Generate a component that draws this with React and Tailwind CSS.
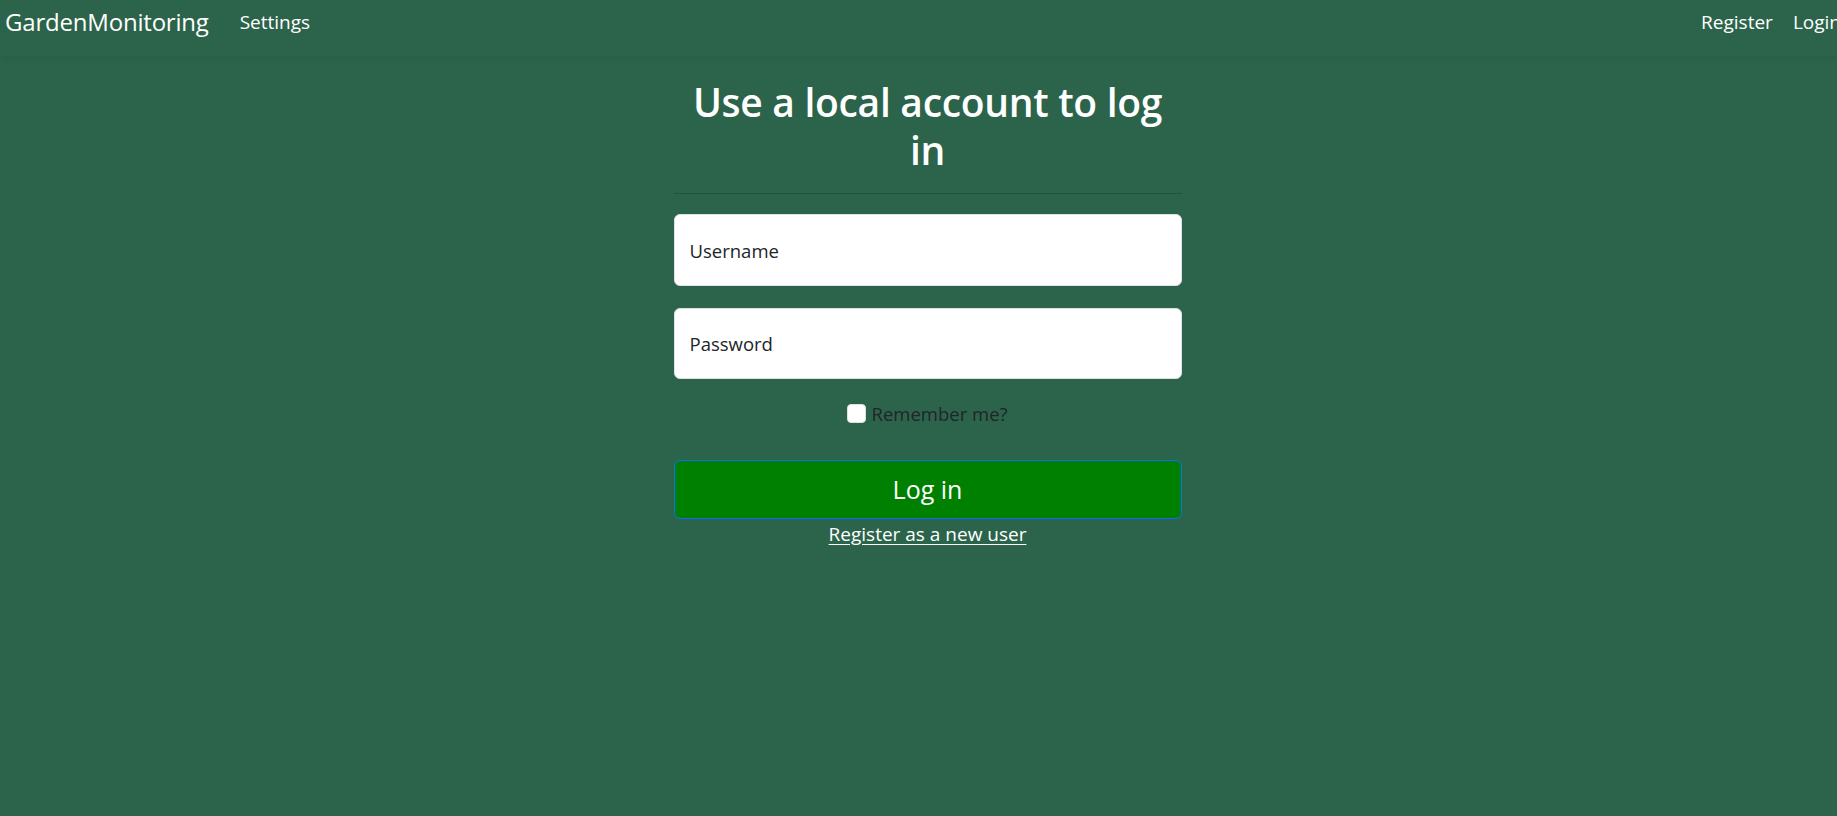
import { useState } from 'react';

export default function App() {
  const [remember, setRemember] = useState(false);

  return (
    <div className="min-h-screen w-full overflow-hidden bg-[#2c644b] font-['Open_Sans',sans-serif] text-white">
      {/* Navbar */}
      <nav className="relative z-10 flex h-[56px] items-start justify-between pt-[10px] shadow-[0_3px_6px_rgba(0,0,0,0.06)]">
        <div className="flex items-center">
          <a href="#" className="ml-[5px] text-[24px] leading-[24px] tracking-[-0.2px]">GardenMonitoring</a>
          <a href="#" className="ml-[31px] text-[19px] leading-[24px]">Settings</a>
        </div>
        <div className="mr-[-4px] flex items-center gap-[20px] text-[19px] leading-[24px]">
          <a href="#">Register</a>
          <a href="#">Login</a>
        </div>
      </nav>

      {/* Login form */}
      <div className="flex justify-center pl-[18px]">
        <main className="w-[508px] pt-[22px]">
          <h1 className="px-[12px] text-center text-[39px] font-semibold leading-[48px] tracking-[-0.3px]">
            Use a local account to log in
          </h1>
          <hr className="mt-[19px] mb-[20px] border-t border-[#23503c]" />

          <div className="flex flex-col gap-[22px]">
            <input
              type="text"
              placeholder="Username"
              className="h-[72px] w-full rounded-[6px] border border-[#dee2e6] bg-white px-[15px] text-[18.5px] text-[#212529] placeholder:text-[#212529] outline-none"
            />
            <input
              type="password"
              placeholder="Password"
              className="h-[71px] w-full rounded-[6px] border border-[#dee2e6] bg-white px-[15px] text-[18.5px] text-[#212529] placeholder:text-[#212529] outline-none"
            />
          </div>

          <label className="mt-[21px] flex items-center justify-center gap-[5px] text-[18.5px] text-[#212529]">
            <span
              onClick={() => setRemember(!remember)}
              className="block h-[19px] w-[19px] rounded-[4px] border border-[#dee2e6] bg-white"
            >
              {remember && <span className="block text-center text-[13px] leading-[17px] text-[#008000]">✓</span>}
            </span>
            Remember me?
          </label>

          <button className="mt-[32px] h-[59px] w-full rounded-[6px] border border-[#0d6efd] bg-[#008000] text-[25px] text-white">
            Log in
          </button>

          <div className="mt-[1px] text-center">
            <a href="#" className="text-[19px] text-white underline underline-offset-[3px]">Register as a new user</a>
          </div>
        </main>
      </div>
    </div>
  );
}
